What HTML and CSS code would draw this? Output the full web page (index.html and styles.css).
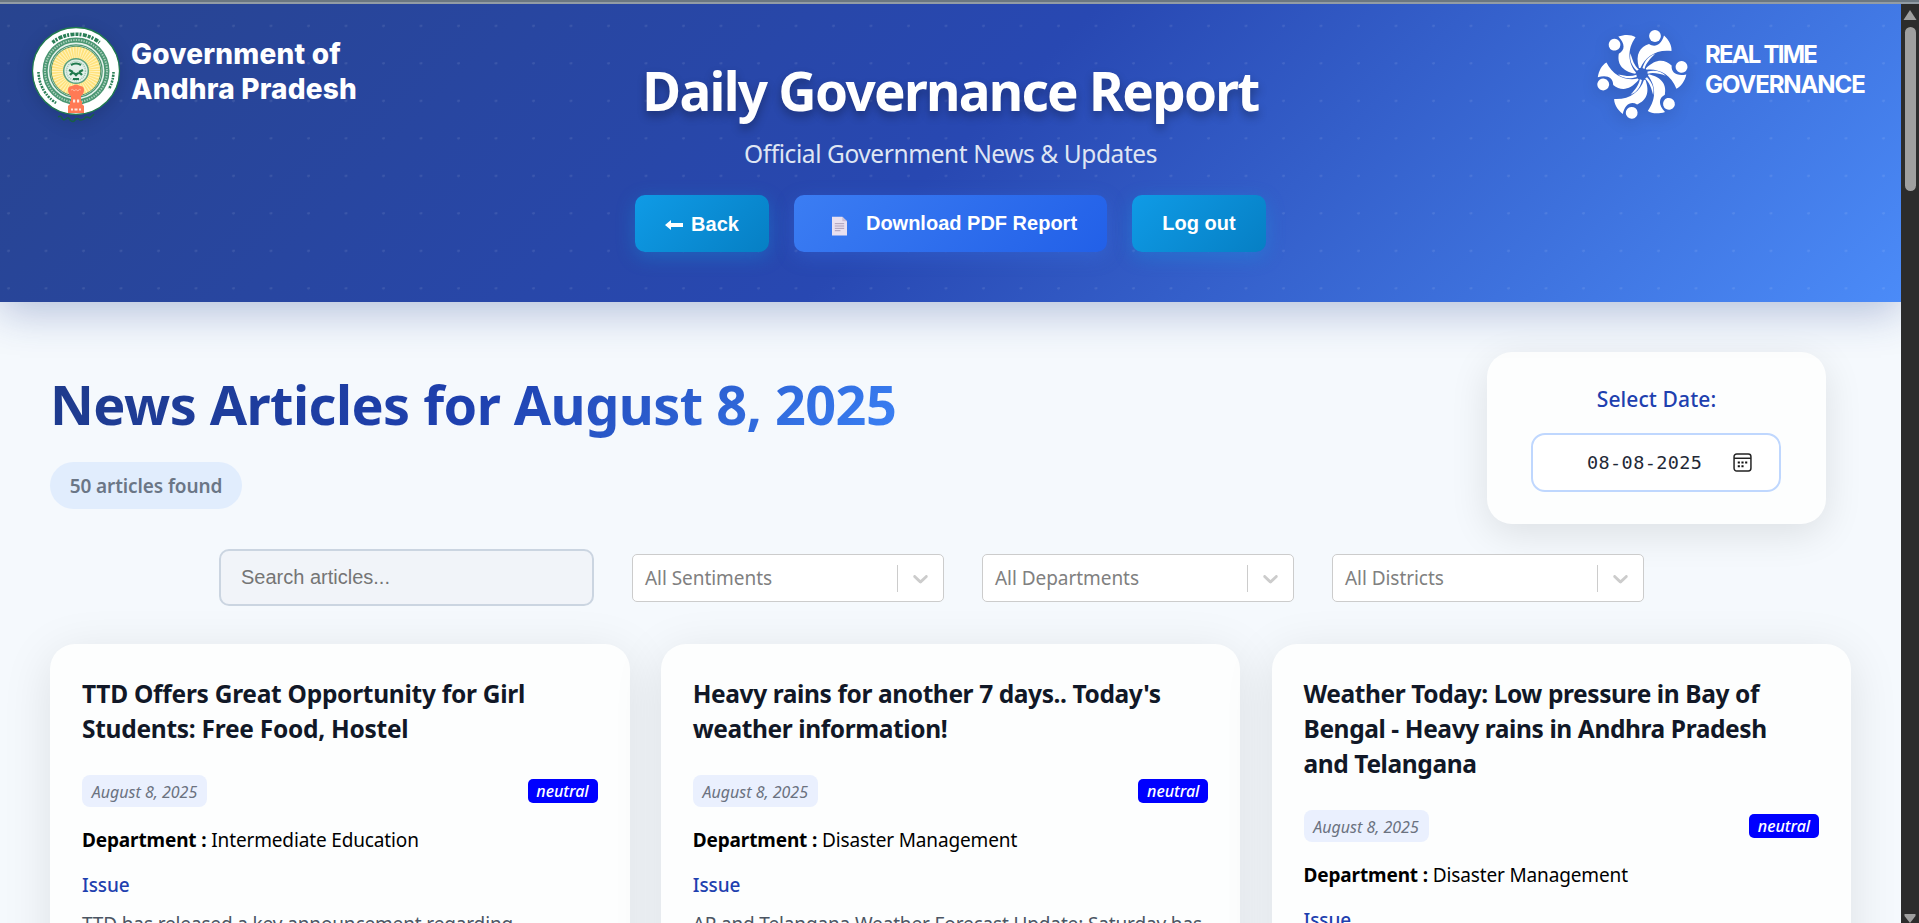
FILE: index.html
```html
<!DOCTYPE html>
<html lang="en">
<head>
<meta charset="utf-8">
<title>Daily Governance Report</title>
<link rel="stylesheet" href="styles.css">
</head>
<body>
<svg width="0" height="0" class="defs" aria-hidden="true">
  <symbol id="chevron" viewBox="0 0 20 20"><path d="M4.516 7.548c0.436-0.446 1.043-0.481 1.576 0l3.908 3.747 3.908-3.747c0.533-0.481 1.141-0.446 1.574 0 0.436 0.445 0.408 1.197 0 1.615-0.406 0.418-4.695 4.502-4.695 4.502-0.217 0.223-0.502 0.335-0.787 0.335s-0.57-0.112-0.789-0.335c0 0-4.287-4.084-4.695-4.502s-0.436-1.17 0-1.615z" fill="#ccc"/></symbol>
</svg>
<div class="topline"></div>
<div class="window">
<div class="page">
  <header class="header">
    <div class="brand">
      <svg class="emblem" viewBox="0 0 92 100">
        <circle cx="46" cy="45" r="43.500" fill="#fff" stroke="#1f7a4d" stroke-width="1.300"/>
        <g fill="none" stroke="#2a7f56" stroke-width="3.600">
          <path d="M22.500 16.500A37.500 37.500 0 0 1 69.500 16.500" stroke-dasharray="3 1 2 1.400 4 1"/>
          <path d="M8.500 46A37.500 37.500 0 0 0 27 77.500" stroke-width="2.600" stroke-dasharray="1.600 1.100 2.200 1"/>
          <path d="M83.500 46A37.500 37.500 0 0 1 79 63" stroke-width="2.600" stroke-dasharray="1.600 1.100 2.200 1"/>
        </g>
        <circle cx="46" cy="45" r="29.500" fill="none" stroke="#4b9672" stroke-width="8"/>
        <circle cx="46" cy="45" r="31" fill="none" stroke="#a9cfbb" stroke-width="2" stroke-dasharray="1.400 1.200"/>
        <circle cx="46" cy="45" r="27.600" fill="none" stroke="#e6f3ec" stroke-width="1.600"/>
        <circle cx="46" cy="45" r="24.800" fill="#ffe27d" stroke="#2a7f56" stroke-width=".8"/>
        <circle cx="46" cy="45" r="18" fill="none" stroke="#fff3bd" stroke-width="12" stroke-dasharray=".9 1.500"/>
        <circle cx="46" cy="45" r="12.300" fill="#e4f0ea" stroke="#5ba17e" stroke-width="1.500"/>
        <circle cx="46" cy="45" r="9.500" fill="none" stroke="#9cc7b0" stroke-width="1.500" stroke-dasharray="1 1"/>
        <path d="M41 39q5-3 10 0M39 44l4 2M53 44l-4 2M40 49q3-4 6 0q3-4 6 0M43 53h6" fill="none" stroke="#1f7a4d" stroke-width="2.200"/>
        <path d="M38 64q0-4 4-4q4-3 8 0q4 0 4 4q0 4-3 6v5h1v3l2 2v7H38v-7l2-2v-3h1v-5q-3-2-3-6z" fill="#ff7a55"/>
        <path d="M43 73.500h2.200v3H43zM47 73.500h2.200v3H47zM41 82.500h2v2h-2zM44.500 82.500h3v2h-3zM49 82.500h2v2h-2z" fill="#ffe9e0"/>
        <path d="M41 64q2-2 3 1q2-3 4 0q1-3 3-1" fill="none" stroke="#ffb39c"/>
        <path d="M28 91q3-2 4 1t4 1q2-3 4 1q3 3 5 0t5 0q4 0 5-2t5 0q3-3 4-4" fill="none" stroke="#176044" stroke-width="1.500"/>
      </svg>
      <div class="brand-name">Government of<br>Andhra Pradesh</div>
    </div>
    <div class="hero">
      <h1 class="title">Daily Governance Report</h1>
      <p class="subtitle">Official Government News &amp; Updates</p>
      <div class="actions">
        <button class="btn btn-sky btn-back"><svg class="arrow" viewBox="0 0 18 12"><path d="M0 6l6-5v3h12v4H6v3z" fill="#fff"/></svg>Back</button>
        <button class="btn btn-blue"><svg class="doc" viewBox="0 0 16 20"><path d="M0 0h11l5 5v15H0z" fill="#e8e0f0"/><path d="M11 0v5h5z" fill="#c9bdd6"/><path d="M3 7.500h10M3 10h10M3 12.500h10M3 15h6" stroke="#a89bb5" stroke-width="1"/></svg><span>Download PDF Report</span></button>
        <button class="btn btn-sky btn-out">Log out</button>
      </div>
    </div>
    <div class="rtg">
      <svg class="swirl" viewBox="-46 -46 92 92">
        <defs><g id="arm" fill="#fff">
          <circle cx="13" cy="-38" r="5.900"/>
          <path d="M-3-6C-7-20-2-27 7-30C13-26 19-29 22-38.500C27-34 30-28 29.500-23C14-25 3-17-1.500-6z"/>
          <path d="M.5-6C3-14 7-18 13-20C8-15 4-11 2.500-5z"/>
        </g></defs>
        <use href="#arm"/><use href="#arm" transform="rotate(61)"/><use href="#arm" transform="rotate(119)"/><use href="#arm" transform="rotate(176)"/><use href="#arm" transform="rotate(236)"/><use href="#arm" transform="rotate(298)"/>
      </svg>
      <div class="rtg-name"><span class="rtg-a">REAL TIME</span><br>GOVERNANCE</div>
    </div>
  </header>

  <main class="main">
    <section class="intro">
      <div>
        <h2 class="heading">News Articles for August 8, 2025</h2>
        <div class="count">50 articles found</div>
      </div>
      <div class="date-card">
        <div class="date-label">Select Date:</div>
        <div class="date-input"><span>08-08-2025</span>
          <svg class="cal" viewBox="0 0 18 18"><rect x="1" y="1" width="16" height="16" rx="2.500" fill="none" stroke="#222" stroke-width="1.400"/><path d="M1 5h16" stroke="#222" stroke-width="1.400"/><path d="M4.500 9h2M8 9h2M11.500 9h2M4.500 12.500h2M8 12.500h2" stroke="#111" stroke-width="2"/></svg>
        </div>
      </div>
    </section>

    <section class="filters">
      <div class="search">Search articles...</div>
      <div class="select"><span>All Sentiments</span><i></i><svg><use href="#chevron"/></svg></div>
      <div class="select"><span>All Departments</span><i></i><svg><use href="#chevron"/></svg></div>
      <div class="select"><span>All Districts</span><i></i><svg><use href="#chevron"/></svg></div>
    </section>

    <section class="cards">
      <article class="card">
        <h3 class="card-title">TTD Offers Great Opportunity for Girl<br>Students: Free Food, Hostel</h3>
        <div class="meta"><span class="chip">August 8, 2025</span><span class="tag">neutral</span></div>
        <p class="dept"><b>Department :</b> Intermediate Education</p>
        <h4 class="issue">Issue</h4>
        <p class="body">TTD has released a key announcement regarding</p>
      </article>
      <article class="card">
        <h3 class="card-title tight">Heavy rains for another 7 days.. Today's<br>weather information!</h3>
        <div class="meta"><span class="chip">August 8, 2025</span><span class="tag">neutral</span></div>
        <p class="dept"><b>Department :</b> Disaster Management</p>
        <h4 class="issue">Issue</h4>
        <p class="body">AP and Telangana Weather Forecast Update: Saturday has</p>
      </article>
      <article class="card">
        <h3 class="card-title tight">Weather Today: Low pressure in Bay of<br>Bengal - Heavy rains in Andhra Pradesh<br>and Telangana</h3>
        <div class="meta"><span class="chip">August 8, 2025</span><span class="tag">neutral</span></div>
        <p class="dept"><b>Department :</b> Disaster Management</p>
        <h4 class="issue">Issue</h4>
      </article>
    </section>
  </main>
</div>
<aside class="scrollbar">
  <svg viewBox="0 0 18 919"><path d="M9 6l6.500 10h-13z" fill="#9f9f9f"/><rect x="4" y="23" width="11" height="164" rx="5.500" fill="#9f9f9f"/><path d="M9 919l-5.500-7v-2h11v2z" fill="#9f9f9f"/></svg>
</aside>
</div>
</body>
</html>
```
FILE: styles.css
```css
* { box-sizing: border-box; margin: 0; padding: 0; }
html, body { height: 923px; overflow: hidden; }
body { font-family: "Noto Sans", sans-serif; font-size: 19px; color: #000; background: #f8fafc; }
.defs { display: block; height: 0; }
.topline { height: 4px; background: linear-gradient(#6b7781 50%, #929ca5 50%); }
.window { display: flex; height: 919px; }
.page { width: 1901px; height: 919px; overflow: hidden; background: #f5f9fd; }
.scrollbar { width: 18px; background: #2c2c2c; }
.scrollbar svg { display: block; width: 18px; height: 919px; }

.header {
  position: relative; height: 298px; display: flex; justify-content: space-between;
  background:
    radial-gradient(circle 1.5px at 8.7px 21.800px, rgba(255,255,255,.09) 90%, transparent) 0 0 / 37.500px 37.500px,
    linear-gradient(135deg, #28448f 0%, #2848b2 50%, #4b8bf8 100%);
  box-shadow: 0 10px 40px rgba(30,58,138,.3);
}
.brand { width: 420px; display: flex; padding: 22px 0 0 30px; }
.emblem { width: 92px; height: 100px; filter: drop-shadow(0 4px 8px rgba(0,0,0,.15)); }
.brand-name { padding: 11px 0 0 9px; font: 800 28px/35px "Inter", sans-serif; letter-spacing: .2px; color: #fff; white-space: nowrap; }
.hero { padding-top: 48px; text-align: center; color: #fff; }
.title { font-size: 53px; line-height: 78px; font-weight: 700; letter-spacing: -1.700px; text-shadow: 0 5px 10px rgba(0,0,0,.3); white-space: nowrap; }
.subtitle { margin-top: 5px; font-size: 24.500px; line-height: 38px; letter-spacing: -.42px; color: #dfe5f3; white-space: nowrap; }
.actions { display: flex; justify-content: center; gap: 25px; margin-top: 22px; }
.btn { height: 57px; border: 0; border-radius: 10px; color: #fff; font: 700 20px "Liberation Sans", sans-serif; display: flex; align-items: center; justify-content: center; white-space: nowrap; }
.btn-sky { width: 134px; background: linear-gradient(135deg, #0f9be6, #067fc4); box-shadow: 0 5px 19px rgba(14,165,233,.3); }
.btn-blue { width: 313px; padding: 0 0 1px 8px; background: linear-gradient(135deg, #3b7df3, #2260e8); box-shadow: 0 5px 19px rgba(59,130,246,.25); }
.btn-back { padding-top: 2px; }
.arrow { width: 18px; height: 12px; margin-right: 8px; }
.doc { width: 15px; height: 20px; margin: 5px 19px 0 0; }
.rtg { width: 420px; display: flex; justify-content: flex-end; padding: 24px 34px 0 0; color: #fff; }
.swirl { width: 92px; height: 92px; filter: drop-shadow(0 4px 8px rgba(0,0,0,.15)); }
.rtg-name { width: 162px; margin-left: 17px; padding-top: 12px; font: 700 24px/30px "Inter", sans-serif; letter-spacing: -1.100px; white-space: nowrap; }
.rtg-a { letter-spacing: -1.800px; }

.main { padding: 50px 50px 0; }
.intro { display: flex; justify-content: space-between; height: 172px; }
.heading { margin-top: 12px; display: inline-block; font-size: 54px; line-height: 80px; font-weight: 700; letter-spacing: -.550px; background: linear-gradient(135deg, #1e3a8a, #1e40af 50%, #3b82f6); -webkit-background-clip: text; background-clip: text; color: transparent; white-space: nowrap; }
.count { width: 192px; height: 47px; margin-top: 18px; border-radius: 24px; background: #e1edfd; color: #6b7686; text-align: center; font-weight: 600; font-size: 19px; letter-spacing: -.1px; line-height: 49px; white-space: nowrap; }
.date-card { width: 339px; height: 172px; margin-right: 25px; padding: 31px 44px; border-radius: 25px; background: #fdfefe; box-shadow: 0 10px 38px rgba(0,0,0,.1); }
.date-label { text-align: center; color: #1e40af; font-size: 21px; font-weight: 500; line-height: 32px; letter-spacing: .1px; }
.date-input { display: flex; align-items: center; height: 59px; margin-top: 18px; width: 250px; padding: 0 27px 0 54px; justify-content: space-between; border: 2px solid #bfd7fe; border-radius: 14px; background: #fff; font: 18.500px "DejaVu Sans Mono", monospace; letter-spacing: .4px; color: #1f2937; }
.cal { width: 19px; height: 19px; }

.filters { display: flex; align-items: center; gap: 38px; margin: 25px 0 38px 169px; height: 57px; }
.search { width: 375px; height: 57px; padding-left: 20px; border: 2px solid #cbd5e1; border-radius: 10px; background: #f1f4f9; color: #757575; font: 20px/52px "Liberation Sans", sans-serif; }
.select { width: 312px; height: 48px; margin-top: 1px; border: 1px solid #ccc; border-radius: 5px; background: #fff; color: #808080; display: flex; align-items: center; padding-left: 12px; }
.select span { flex: 1; letter-spacing: -.05px; white-space: nowrap; }
.select i { width: 1px; height: 27px; background: #ccc; }
.select svg { width: 25px; height: 25px; margin: 0 10px; }

.cards { display: grid; grid-template-columns: repeat(3, 1fr); gap: 31.250px; }
.card { height: 400px; padding: 32px; border-radius: 25px; background: #fdfefe; box-shadow: 0 10px 50px rgba(0,0,0,.1); }
.card-title { font-size: 24.500px; line-height: 35px; font-weight: 700; letter-spacing: -.27px; color: #111827; white-space: nowrap; }
.card-title.tight { letter-spacing: -.4px; }
.meta { display: flex; justify-content: space-between; align-items: center; margin-top: 29px; height: 32px; font-style: italic; }
.chip { width: 125px; height: 32px; border-radius: 8px; background: #eaf0fe; color: #6b7280; font-size: 16px; line-height: 34px; text-align: center; white-space: nowrap; }
.tag { width: 70px; height: 24px; border-radius: 5px; background: #00f; color: #fff; font-size: 16px; font-weight: 500; line-height: 24px; text-align: center; }
.dept { margin-top: 18px; line-height: 30px; letter-spacing: -.14px; white-space: nowrap; }
.issue { margin-top: 15px; line-height: 30px; font-weight: 500; letter-spacing: -.1px; color: #1e40af; }
.body { margin-top: 9px; line-height: 30px; letter-spacing: -.14px; color: #4b5563; white-space: nowrap; }
```
